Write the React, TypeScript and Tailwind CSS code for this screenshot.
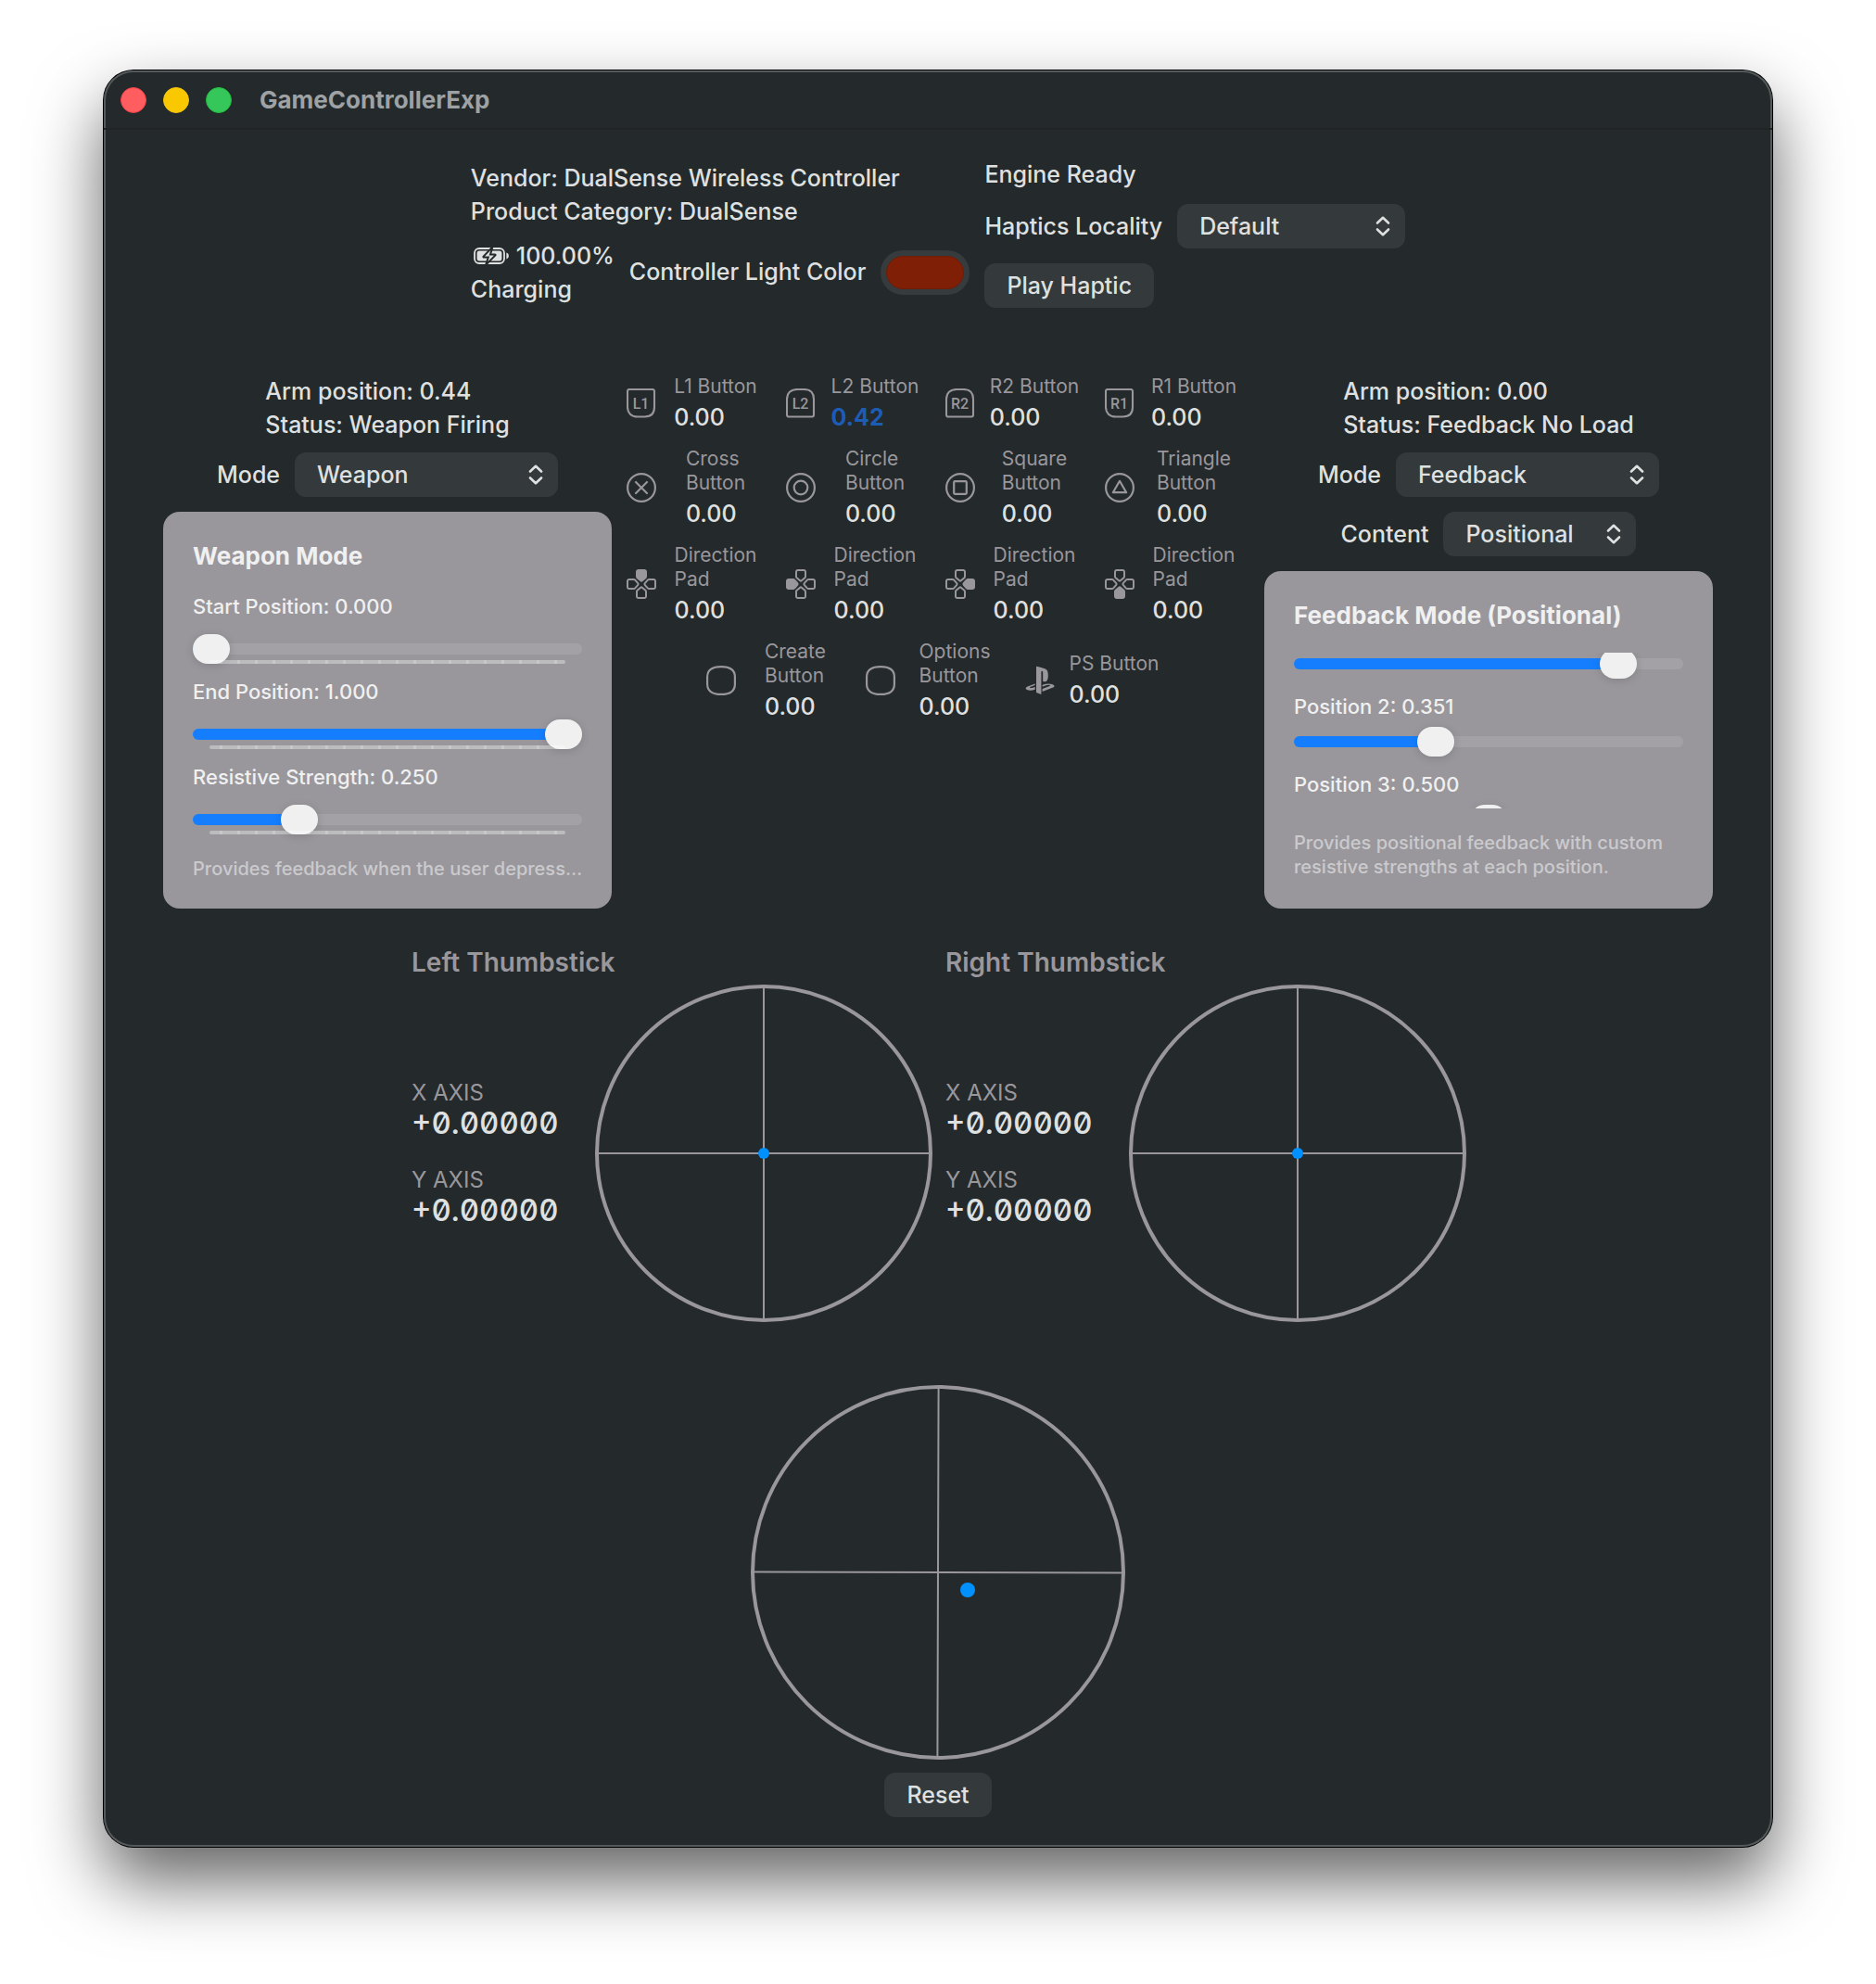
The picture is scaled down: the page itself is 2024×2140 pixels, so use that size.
import { useId, useState } from "react";
import type { CSSProperties, ReactNode } from "react";

/* ---------- icons ---------- */

function Chevrons() {
  return (
    <svg
      className="pointer-events-none absolute top-1/2 right-4 -translate-y-1/2"
      width="16"
      height="22"
      viewBox="0 0 16 22"
      fill="none"
      stroke="#dfe0e0"
      strokeWidth="2.6"
      strokeLinecap="round"
      strokeLinejoin="round"
      aria-hidden="true"
    >
      <path d="M2 7.5 8 1.8l6 5.7M2 14.5l6 5.7 6-5.7" />
    </svg>
  );
}

function BatteryIcon() {
  return (
    <svg width="38" height="18" viewBox="0 0 38 18" aria-hidden="true">
      <rect x="1" y="1" width="32" height="16" rx="5" fill="none" stroke="#dfe0e0" strokeWidth="1.8" />
      <rect x="3.6" y="3.6" width="26.8" height="10.8" rx="2.6" fill="#dfe0e0" />
      <path d="M35.4 5.6c1.6.6 2.5 1.9 2.5 3.4s-.9 2.8-2.5 3.4z" fill="#dfe0e0" />
      <path
        d="M20.4-.6 10.6 9.6c-.4.5-.1 1 .5 1h4.7l-2.6 8 10.2-10.2c.4-.5.1-1-.5-1h-4.9z"
        fill="#dfe0e0"
        stroke="#24292b"
        strokeWidth="2"
      />
    </svg>
  );
}

function ShoulderIcon({ label, trigger }: { label: string; trigger?: boolean }) {
  return (
    <svg width="32" height="32" viewBox="0 0 32 32" fill="none" aria-hidden="true">
      <path
        d={
          trigger
            ? "M12 1h7.5C26.5 1 30 5 30 11.5V28.5a2 2 0 0 1-2 2H3a2 2 0 0 1-2-2V11.5C1 5 5 1 12 1z"
            : "M3 1h25a2 2 0 0 1 2 2v17c0 6.5-3.5 10.5-10.5 10.5H12C5 30.5 1 26.5 1 20V3a2 2 0 0 1 2-2z"
        }
        stroke="#99979c"
        strokeWidth="2.1"
      />
      <text
        x="15.5"
        y="22"
        textAnchor="middle"
        fill="#99979c"
        className="font-['Roboto',sans-serif] text-[16px] font-medium"
      >
        {label}
      </text>
    </svg>
  );
}

function FaceIcon({ children }: { children: ReactNode }) {
  return (
    <svg
      width="32"
      height="32"
      viewBox="0 0 32 32"
      fill="none"
      stroke="#99979c"
      strokeWidth="2.2"
      strokeLinecap="round"
      strokeLinejoin="round"
      aria-hidden="true"
    >
      <circle cx="16" cy="16" r="14.9" />
      {children}
    </svg>
  );
}

function PadIcon({ active }: { active: number }) {
  return (
    <svg width="32" height="32" viewBox="0 0 32 32" stroke="#99979c" strokeWidth="2" aria-hidden="true">
      {[0, 90, 180, 270].map((angle) => (
        <path
          key={angle}
          d="M12.8 1h6.4a1.8 1.8 0 0 1 1.8 1.8v5a2 2 0 0 1-.6 1.4l-3.6 3.1a1.2 1.2 0 0 1-1.6 0l-3.6-3.1a2 2 0 0 1-.6-1.4v-5A1.8 1.8 0 0 1 12.8 1z"
          transform={`rotate(${angle} 16 16)`}
          fill={angle === active ? "#99979c" : "none"}
        />
      ))}
    </svg>
  );
}

function MenuIcon() {
  return (
    <svg width="32" height="32" viewBox="0 0 32 32" fill="none" stroke="#99979c" strokeWidth="2.2" aria-hidden="true">
      <path d="M16 1.1c10 0 14.9 4 14.9 11v7.8c0 7-4.900 11-14.900 11S1.100 26.900 1.100 19.900v-7.800c0-7 4.900-11 14.900-11z" />
    </svg>
  );
}

function PlayStationIcon() {
  return (
    <svg width="32" height="32" viewBox="0 0 32 32" fill="#99979c" aria-hidden="true">
      <path d="M12 .7c3 .6 7.500 1.900 9.800 2.800 2.400 1 3 3.400 3 7 0 5.500-1.600 7.700-5.600 6.500V7.500c0-1-.4-1.700-1-1.700s-.8.700-.8 1.500V31L12 29z" />
      <path d="M10.700 19.500 4 21.900c-3.600 1.300-4.500 2.900-2 4.100 2.300 1.100 5.500.9 8.700-.2v-2.900l-2.400.8c-1.500.5-2.900.5-3.200.1s.3-.9 1.600-1.400l4-1.400z" />
      <path d="M18.600 20.800c4-1.600 8-1.700 11-.6 2.600 1 2.400 2.600 0 3.600l-11 4.300V25l7.800-2.900c1-.4.9-1-.2-1.200s-2.500 0-3.600.4l-4 1.400z" />
    </svg>
  );
}

/* ---------- controls ---------- */

function Picker({ label, options, width }: { label: string; options: string[]; width: string }) {
  const id = useId();
  return (
    <div className="flex items-center gap-4">
      <label htmlFor={id} className="leading-8">
        {label}
      </label>
      <div className={`relative ${width}`}>
        <select id={id} className="block h-12 w-full appearance-none rounded-xl bg-[#34393b] pt-0.5 pl-6 text-[#dfe0e0]">
          {options.map((option) => (
            <option key={option}>{option}</option>
          ))}
        </select>
        <Chevrons />
      </div>
    </div>
  );
}

function Slider({ label, initial, ticks }: { label: string; initial: number; ticks?: boolean }) {
  const [value, setValue] = useState(initial);
  return (
    <div className="relative h-8">
      <input
        type="range"
        aria-label={label}
        min={0}
        max={1}
        step={0.001}
        value={value}
        onChange={(event) => setValue(Number(event.target.value))}
        style={{ "--fill": `calc(20px + (100% - 40px) * ${value})` } as CSSProperties}
        className="block h-8 w-full appearance-none bg-transparent [&::-webkit-slider-runnable-track]:h-3 [&::-webkit-slider-runnable-track]:rounded-full [&::-webkit-slider-runnable-track]:bg-[linear-gradient(to_right,#147eff_var(--fill),#a3a1a6_var(--fill))] [&::-webkit-slider-thumb]:-mt-2.5 [&::-webkit-slider-thumb]:h-8 [&::-webkit-slider-thumb]:w-10 [&::-webkit-slider-thumb]:appearance-none [&::-webkit-slider-thumb]:rounded-full [&::-webkit-slider-thumb]:bg-[#f0f0f0] [&::-webkit-slider-thumb]:shadow-[0_2px_10px_rgba(0,0,0,0.14)]"
      />
      {ticks && (
        <div className="pointer-events-none absolute inset-x-[18px] bottom-0 h-1 rounded-full bg-white/35 bg-[repeating-linear-gradient(to_right,transparent_0_11px,rgba(255,255,255,0.18)_11px_14px,transparent_14px_19px)]" />
      )}
    </div>
  );
}

function PushButton({ children }: { children: ReactNode }) {
  return (
    <button type="button" className="h-12 rounded-xl bg-[#34393b] px-6 pt-0.5 text-[#dfe0e0]">
      {children}
    </button>
  );
}

/* ---------- sections ---------- */

function TitleBar() {
  return (
    <header className="flex h-16 items-center gap-[18px] pl-[18px] shadow-[inset_0_-2px_0_#212424]">
      <button type="button" aria-label="Close" className="size-7 rounded-full border border-[#f0414a] bg-[#ff5d60]" />
      <button type="button" aria-label="Minimize" className="size-7 rounded-full border border-[#f2c20c] bg-[#fac800]" />
      <button type="button" aria-label="Zoom" className="size-7 rounded-full border border-[#1fbb3c] bg-[#35c759]" />
      <h1 className="ml-3 text-[26px] leading-8 font-bold text-[#9ea2a4]">GameControllerExp</h1>
    </header>
  );
}

function ControllerInfo() {
  const colorId = useId();
  return (
    <section className="flex items-center justify-center gap-4">
      <div className="flex flex-col gap-3">
        <div className="leading-9">
          <p>Vendor: DualSense Wireless Controller</p>
          <p>Product Category: DualSense</p>
        </div>
        <div className="flex items-center gap-4">
          <div className="leading-9">
            <p className="flex items-center gap-2 pl-[3px]">
              <BatteryIcon />
              100.00%
            </p>
            <p>Charging</p>
          </div>
          <div className="flex items-center gap-4">
            <label htmlFor={colorId}>Controller Light Color</label>
            <input
              id={colorId}
              type="color"
              defaultValue="#7f1f06"
              className="block h-12 w-24 appearance-none rounded-full bg-[#363c3e] p-1.5 [&::-webkit-color-swatch]:rounded-full [&::-webkit-color-swatch]:border [&::-webkit-color-swatch]:border-[#6d1d08] [&::-webkit-color-swatch-wrapper]:p-0"
            />
          </div>
        </div>
      </div>
      <div className="flex flex-col items-start gap-4">
        <p className="leading-8">Engine Ready</p>
        <Picker label="Haptics Locality" options={["Default"]} width="w-[246px]" />
        <PushButton>Play Haptic</PushButton>
      </div>
    </section>
  );
}

function TriggerHeader({ position, status }: { position: string; status: string }) {
  return (
    <div className="leading-9">
      <p>Arm position: {position}</p>
      <p>Status: {status}</p>
    </div>
  );
}

function WeaponPanel() {
  const rows = [
    { name: "Start Position", value: 0 },
    { name: "End Position", value: 1 },
    { name: "Resistive Strength", value: 0.25 },
  ];
  return (
    <div className="flex w-full flex-col gap-6 rounded-[18px] bg-[#99979c] px-8 pt-8 pb-[30px] text-[#f0f0f0]">
      <h2 className="text-[26px] leading-8 font-bold">Weapon Mode</h2>
      <div className="flex flex-col gap-4">
        {rows.map((row) => (
          <div key={row.name} className="flex flex-col gap-4">
            <p className="text-[22px] leading-7">
              {row.name}: {row.value.toFixed(3)}
            </p>
            <Slider label={row.name} initial={row.value} ticks />
          </div>
        ))}
      </div>
      <p className="text-[20px] leading-[26px] whitespace-nowrap text-[#cbcacd]">
        Provides feedback when the user depress…
      </p>
    </div>
  );
}

function FeedbackPanel() {
  return (
    <div className="flex w-full flex-col gap-6 rounded-[18px] bg-[#99979c] p-8 text-[#f0f0f0]">
      <h2 className="text-[26px] leading-8 font-bold">Feedback Mode (Positional)</h2>
      <div className="h-42 overflow-hidden">
        <div className="-mt-1 flex flex-col gap-4">
          <Slider label="Position 1" initial={0.868} />
          <div className="flex flex-col gap-2">
            <p className="text-[22px] leading-7">Position 2: 0.351</p>
            <Slider label="Position 2" initial={0.351} />
          </div>
          <div className="flex flex-col gap-2">
            <p className="text-[22px] leading-7">Position 3: 0.500</p>
            <Slider label="Position 3" initial={0.5} />
          </div>
        </div>
      </div>
      <p className="text-[20px] leading-[26px] text-[#cbcacd]">
        Provides positional feedback with custom resistive strengths at each position.
      </p>
    </div>
  );
}

function InputCell({ icon, lines, value = "0.00", active }: { icon: ReactNode; lines: string[]; value?: string; active?: boolean }) {
  return (
    <div className="flex w-40 items-center">
      <div className="flex w-9 shrink-0 justify-center">{icon}</div>
      <div className="flex flex-1 justify-center">
        <div>
          {lines.map((line) => (
            <p key={line} className="text-[21px] leading-[26px] font-normal text-[#99979c]">
              {line}
            </p>
          ))}
          <p className={active ? "mt-1 leading-8 font-bold text-[#1d5cb4]" : "mt-1 leading-8"}>{value}</p>
        </div>
      </div>
    </div>
  );
}

function InputGrid() {
  return (
    <div className="flex flex-col gap-4">
      <div className="flex justify-center gap-3">
        <InputCell icon={<ShoulderIcon label="L1" />} lines={["L1 Button"]} />
        <InputCell icon={<ShoulderIcon label="L2" trigger />} lines={["L2 Button"]} value="0.42" active />
        <InputCell icon={<ShoulderIcon label="R2" trigger />} lines={["R2 Button"]} />
        <InputCell icon={<ShoulderIcon label="R1" />} lines={["R1 Button"]} />
      </div>
      <div className="flex justify-center gap-3">
        <InputCell icon={<FaceIcon><path d="m10 10 12 12M22 10 10 22" /></FaceIcon>} lines={["Cross", "Button"]} />
        <InputCell icon={<FaceIcon><circle cx="16" cy="16" r="7.3" /></FaceIcon>} lines={["Circle", "Button"]} />
        <InputCell icon={<FaceIcon><rect x="9.2" y="9.2" width="13.6" height="13.6" rx="1" /></FaceIcon>} lines={["Square", "Button"]} />
        <InputCell icon={<FaceIcon><path d="m16 8.800 7.200 12.400H8.800z" /></FaceIcon>} lines={["Triangle", "Button"]} />
      </div>
      <div className="flex justify-center gap-3">
        {[0, 270, 90, 180].map((angle) => (
          <InputCell key={angle} icon={<PadIcon active={angle} />} lines={["Direction", "Pad"]} />
        ))}
      </div>
      <div className="flex justify-center gap-3">
        <InputCell icon={<MenuIcon />} lines={["Create", "Button"]} />
        <InputCell icon={<MenuIcon />} lines={["Options", "Button"]} />
        <InputCell icon={<PlayStationIcon />} lines={["PS Button"]} />
      </div>
    </div>
  );
}

function Axis({ name }: { name: string }) {
  return (
    <div>
      <p className="text-[24px] leading-7 font-normal text-[#99979c]">{name} AXIS</p>
      <p className="text-[33px] leading-9 slashed-zero tabular-nums">+0.00000</p>
    </div>
  );
}

function Thumbstick({ name }: { name: string }) {
  return (
    <div className="flex w-[560px] flex-col gap-2">
      <h2 className="text-[28px] leading-9 font-semibold text-[#99979c]">{name}</h2>
      <div className="flex items-center justify-between">
        <div className="flex flex-col gap-[30px]">
          <Axis name="X" />
          <Axis name="Y" />
        </div>
        <svg className="overflow-visible" width="360" height="360" viewBox="0 0 360 360" fill="none" stroke="#99979c" aria-hidden="true">
          <circle cx="180" cy="180" r="180" strokeWidth="4" />
          <path d="M180 0v360M0 180h360" strokeWidth="2" />
          <circle cx="180" cy="180" r="6" fill="#0091ff" stroke="none" />
        </svg>
      </div>
    </div>
  );
}

function MotionView() {
  return (
    <section className="flex flex-col items-center gap-4">
      <svg className="overflow-visible" width="400" height="400" viewBox="0 0 400 400" fill="none" stroke="#99979c" aria-hidden="true">
        <circle cx="200" cy="200" r="200" strokeWidth="4" />
        <path d="M200.6 0 199.4 400M0 199.4 400 200.6" strokeWidth="2" />
        <circle cx="232" cy="219" r="8" fill="#0091ff" stroke="none" />
      </svg>
      <PushButton>Reset</PushButton>
    </section>
  );
}

export default function App() {
  return (
    <div className="overflow-hidden bg-white px-28 pt-[76px] pb-[148px] font-['Inter','Liberation_Sans',sans-serif] text-[25px] font-medium text-[#dfe0e0]">
      <main className="rounded-[32px] bg-[#24292b] shadow-[inset_0_0_0_2px_#54595b,0_0_0_1px_#000,0_36px_76px_rgba(0,0,0,0.62)]">
        <TitleBar />
        <div className="flex flex-col gap-18 px-4 pt-8 pb-8">
          <ControllerInfo />
          <div className="flex flex-col gap-10">
            <section className="flex items-start justify-center gap-3.5">
              <div className="flex w-[484px] flex-col items-center gap-4">
                <div className="flex flex-col items-center gap-3">
                  <TriggerHeader position="0.44" status="Weapon Firing" />
                  <Picker label="Mode" options={["Weapon", "Feedback"]} width="w-[284px]" />
                </div>
                <WeaponPanel />
              </div>
              <InputGrid />
              <div className="flex w-[484px] flex-col items-center gap-4">
                <div className="flex flex-col items-center gap-3">
                  <TriggerHeader position="0.00" status="Feedback No Load" />
                  <Picker label="Mode" options={["Feedback", "Weapon"]} width="w-[284px]" />
                </div>
                <Picker label="Content" options={["Positional"]} width="w-[208px]" />
                <FeedbackPanel />
              </div>
            </section>
            <section className="flex justify-center gap-4">
              <Thumbstick name="Left Thumbstick" />
              <Thumbstick name="Right Thumbstick" />
            </section>
          </div>
          <MotionView />
        </div>
      </main>
    </div>
  );
}
